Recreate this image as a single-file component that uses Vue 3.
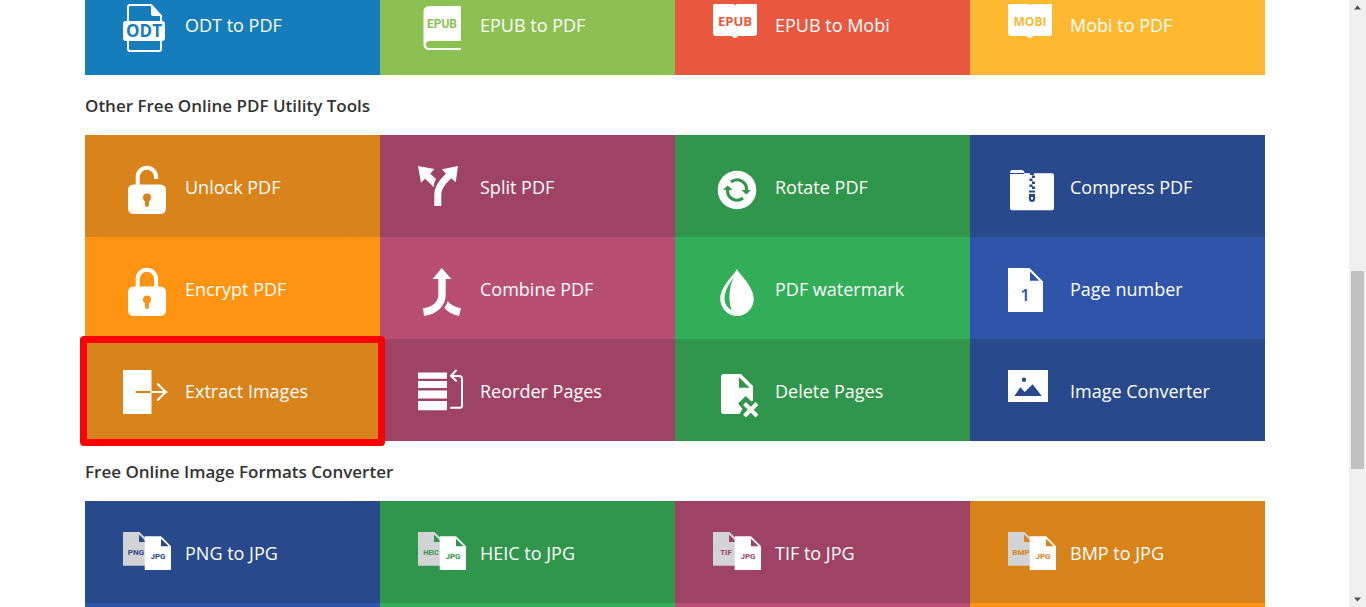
<script setup>
const convertTiles = [
  { label: 'ODT to PDF', icon: 'odt', tone: 'azure' },
  { label: 'EPUB to PDF', icon: 'book', tone: 'lime' },
  { label: 'EPUB to Mobi', icon: 'open-book', tag: 'EPUB', tone: 'red' },
  { label: 'Mobi to PDF', icon: 'open-book', tag: 'MOBI', tone: 'yellow' },
]

const utilityTiles = [
  { label: 'Unlock PDF', icon: 'unlock', tone: 'orange-dark' },
  { label: 'Split PDF', icon: 'split', tone: 'plum-dark' },
  { label: 'Rotate PDF', icon: 'rotate', tone: 'green-dark' },
  { label: 'Compress PDF', icon: 'zip', tone: 'blue-dark' },
  { label: 'Encrypt PDF', icon: 'lock', tone: 'orange' },
  { label: 'Combine PDF', icon: 'combine', tone: 'plum' },
  { label: 'PDF watermark', icon: 'drop', tone: 'green' },
  { label: 'Page number', icon: 'page', tone: 'blue' },
  { label: 'Extract Images', icon: 'extract', tone: 'orange-dark', marked: true },
  { label: 'Reorder Pages', icon: 'reorder', tone: 'plum-dark' },
  { label: 'Delete Pages', icon: 'delete', tone: 'green-dark' },
  { label: 'Image Converter', icon: 'image', tone: 'blue-dark' },
]

const imageTiles = [
  { label: 'PNG to JPG', icon: 'pair', tag: 'PNG', tone: 'blue-dark' },
  { label: 'HEIC to JPG', icon: 'pair', tag: 'HEIC', tone: 'green-dark' },
  { label: 'TIF to JPG', icon: 'pair', tag: 'TIF', tone: 'plum-dark' },
  { label: 'BMP to JPG', icon: 'pair', tag: 'BMP', tone: 'orange-dark' },
]

const sections = [
  { title: '', tiles: convertTiles, next: [] },
  { title: 'Other Free Online PDF Utility Tools', tiles: utilityTiles, next: [] },
  {
    title: 'Free Online Image Formats Converter',
    tiles: imageTiles,
    next: ['blue', 'green', 'plum', 'orange'],
  },
]
</script>

<template>
  <div class="window">
    <main class="page">
      <section v-for="(section, i) in sections" :key="i" class="section">
        <h2 v-if="section.title" class="title">{{ section.title }}</h2>
        <div class="grid">
          <a
            v-for="tile in section.tiles"
            :key="tile.label"
            href="#"
            class="tile"
            :class="[tile.tone, { marked: tile.marked }]"
          >
            <svg class="icon" viewBox="0 0 50 50" aria-hidden="true">
              <g v-if="tile.icon === 'odt'">
                <path class="line" d="M5 17V3a2 2 0 0 1 2-2h21l10 11v5M5 37v8a2 2 0 0 0 2 2h29a2 2 0 0 0 2-2v-8" />
                <path d="M28 0l11 12H30a2 2 0 0 1-2-2z" />
                <rect x="0" y="17" width="42" height="20" rx="3" />
                <text class="ink t17" x="21" y="33">ODT</text>
              </g>

              <g v-else-if="tile.icon === 'book'">
                <path d="M11 2h32v35H11.500a3.500 3.500 0 0 0 0 7H43v2H11a5.500 5.500 0 0 1-5.500-5.500V7.500A5.500 5.500 0 0 1 11 2z" />
                <text class="ink narrow t12" x="24" y="24">EPUB</text>
              </g>

              <g v-else-if="tile.icon === 'open-book'">
                <path d="M1 0h19l2 1 2-1h20v29a3 3 0 0 1-3 3H26c-1 0-2 2-4 2s-3-2-4-2H3a3 3 0 0 1-3-3V1z" />
                <text class="ink" :class="tile.tag === 'EPUB' ? 't13' : 't12'" x="22" y="22">{{ tile.tag }}</text>
              </g>

              <g v-else-if="tile.icon === 'unlock' || tile.icon === 'lock'">
                <path v-if="tile.icon === 'unlock'" class="shackle" d="M14.700 20v-9a9.200 9.200 0 0 1 18.400 0v2" />
                <path v-else class="shackle" d="M14.700 20v-9a9.200 9.200 0 0 1 18.400 0v9" />
                <rect x="5" y="18.500" width="38" height="29.500" rx="5.500" />
                <circle class="ink" cx="24" cy="31.500" r="4" />
                <path class="ink" d="M22 33h4v6a2 2 0 0 1-4 0z" />
              </g>

              <g v-else-if="tile.icon === 'split'">
                <path d="M0 0l16.300 3-4 4.700 5.700 5.300c-1.500 3-2.500 5-2 8.300L7 12.700l-4 4z" />
                <path d="M40 0l-2.300 16.300-4.400-4C28 17.500 23.300 22 23.300 29v11h-7V29c0-9 5.500-15.500 11.700-21.300l-4-4.400z" />
              </g>

              <g v-else-if="tile.icon === 'combine'">
                <path d="M23.700 0l9.600 11h-5.600v16c0 11-9 19.500-21.700 21l-1-7.700c9-1.300 15.300-6 15.300-13.300V11h-5.600z" />
                <path d="M29.700 33c3 4 7.500 6.300 13.300 7.300L41 48c-6.500-1.500-11-4-14.700-8.300 1.700-2 2.700-4 3.400-6.700z" />
              </g>

              <g v-else-if="tile.icon === 'rotate'">
                <circle cx="24" cy="24" r="19.300" />
                <path class="ink-line" d="M18 16a9.500 9.500 0 0 1 15.500 8M30 32a9.500 9.500 0 0 1-15.500-8" />
                <path class="ink" d="M28.500 24H38l-4.700 4.500zM10 24h9.500l-4.800-4.500z" />
              </g>

              <g v-else-if="tile.icon === 'drop'">
                <path d="M24 .5c1 5 16.700 17 16.700 30.500a16.700 17 0 0 1-33.400 0C7.300 17.500 23 5.500 24 .5z" />
                <path class="ink" d="M21 9c-5 7-9.500 14-9.500 21.500 0 5 2.500 9 7 11.500C15 31 16 19 21 9z" />
              </g>

              <g v-else-if="tile.icon === 'zip'">
                <path d="M2 6.500a2.500 2.500 0 0 1 2.500-2.500h9a3 3 0 0 1 2.800 3.300H44a2 2 0 0 1 2 2v33a2 2 0 0 1-2 2H4a2 2 0 0 1-2-2z" />
                <path class="ink-hair" d="M2 7.500h14" />
                <path class="ink" d="M22 7h4v2h-4zM24 9.500h3V12h-3zM21.500 12.500h3V15h-3zM24 15.500h3V18h-3zM21.500 18.500h3V21h-3zM24 20.500h3V23h-3zM21 24.500h6v2h-6z" />
                <path class="ink" fill-rule="evenodd" d="M21 28h6v5a3 3 0 0 1-6 0zM23 31v2.500h2V31z" />
              </g>

              <g v-else-if="tile.icon === 'page'">
                <path d="M0 0h21.500L35 13.500V44H0z" />
                <path class="ink" d="M22 3.500v9.200h9.200z" />
                <text class="ink medium t17" x="17" y="33">1</text>
              </g>

              <g v-else-if="tile.icon === 'extract'">
                <path d="M0 0h28.500v44H0z" />
                <path class="ink-thin" d="M13.500 22h15" />
                <path class="line thin" d="M28.500 22h15M34.700 14l8 8-8 8" />
              </g>

              <g v-else-if="tile.icon === 'reorder'">
                <path d="M0 2.500h29v6.200H0zM0 11h29v7H0zM0 20.500h29v8H0zM0 31h29v9.300H0z" />
                <path class="line thin" d="M33 37.700h9a2 2 0 0 0 2-2V9a3 3 0 0 0-3-3h-8M38 .5L33 5.800l5 5" />
              </g>

              <g v-else-if="tile.icon === 'delete'">
                <path d="M11 4h17l12 12v14.700l-1.500.8-5.800-5.500-7.700 7.500 4.500 5.500-3 5H11a3 3 0 0 1-3-3V7a3 3 0 0 1 3-3z" />
                <path class="ink" d="M26 7.300v10.400h10.700z" />
                <path class="cross" d="M31.500 33.500l12.500 12.500M44 33.500L31.500 46" />
              </g>

              <g v-else-if="tile.icon === 'image'">
                <path d="M0 0h40v32H0z" />
                <circle class="ink" cx="16" cy="9.700" r="2.200" />
                <path class="ink" d="M6.300 26l6-8.700 4.400 4.700 8-7.700 9 11.700z" />
              </g>

              <g v-else>
                <path class="back" d="M0 0h16.500L23 6.500v27.300H0z" />
                <path class="ink" d="M16 2.500V10h6.500V9z" />
                <text class="ink narrow" :class="tile.tag === 'HEIC' ? 't7' : 't8'" x="13" y="23">{{ tile.tag }}</text>
                <path d="M21.700 4.300H38l10 10V38H21.700z" />
                <path class="ink" d="M38 6.700v7.600h7.700z" />
                <text class="ink narrow t8" x="35" y="27">JPG</text>
              </g>
            </svg>
            <span class="label">{{ tile.label }}</span>
          </a>
          <div v-for="tone in section.next" :key="tone" class="tile" :class="tone"></div>
        </div>
      </section>
    </main>

    <div class="scrollbar" aria-hidden="true">
      <svg class="arrow" viewBox="0 0 17 17"><path d="M8.500 5.500L12 9.500H5z" /></svg>
      <div class="before"></div>
      <div class="thumb"></div>
      <div class="after"></div>
      <svg class="arrow" viewBox="0 0 17 17"><path d="M8.500 11.500L12 7.500H5z" /></svg>
    </div>
  </div>
</template>

<style>
body {
  background: #fff;
}
</style>

<style scoped>
.window {
  display: flex;
  height: 100vh;
  overflow: hidden;
  font-family: 'Open Sans', 'Noto Sans', sans-serif;
}
.page {
  flex: 1;
  min-width: 0;
  padding: 0 84px 0 85px;
  /* scrolled part of the first row */
  margin-top: -27px;
}
.title {
  margin: 0;
  padding-top: 2px;
  color: #333;
  font-size: 17px;
  font-weight: 600;
  line-height: 58px;
  white-space: nowrap;
}
.grid {
  display: grid;
  grid-template-columns: repeat(4, 1fr);
}
.tile {
  --bg: #28498c;
  position: relative;
  display: flex;
  align-items: flex-start;
  gap: 12px;
  box-sizing: border-box;
  min-height: 102px;
  padding: 31px 0 0 38px;
  background: var(--bg);
  color: #fff;
  text-decoration: none;
}
.azure { --bg: #167dbd; }
.lime { --bg: #8cc152; }
.red { --bg: #e8573e; }
.yellow { --bg: #feb931; }
.orange-dark { --bg: #d9831b; }
.orange { --bg: #ff9412; }
.plum-dark { --bg: #9f4365; }
.plum { --bg: #b94e73; }
.green-dark { --bg: #30964b; }
.green { --bg: #31ae57; }
.blue-dark { --bg: #28498c; }
.blue { --bg: #2f55ab; }

.marked {
  z-index: 1;
}
.marked::after {
  content: '';
  position: absolute;
  inset: -3px -5px -5px -5px;
  border: 7px solid #fe0000;
  border-radius: 4px;
}
.label {
  font-size: 18px;
  line-height: 42px;
  white-space: nowrap;
}
.icon {
  flex: none;
  width: 50px;
  height: 50px;
  fill: #fff;
  overflow: visible;
}
.icon .ink { fill: var(--bg); }
.icon .back { fill: #d2d3d5; }
.icon .line { fill: none; stroke: #fff; stroke-width: 2; }
.icon .thin { stroke-width: 2; stroke-linecap: round; stroke-linejoin: round; }
.icon .shackle { fill: none; stroke: #fff; stroke-width: 4; }
.icon .cross { fill: none; stroke: #fff; stroke-width: 4; }
.icon .ink-line { fill: none; stroke: var(--bg); stroke-width: 3; }
.icon .ink-thin { fill: none; stroke: var(--bg); stroke-width: 2; stroke-linecap: round; }
.icon .ink-hair { fill: none; stroke: var(--bg); stroke-width: 1; }
.icon text {
  font-weight: 700;
  text-anchor: middle;
}
.icon .narrow { font-family: Roboto, sans-serif; }
.icon .medium { font-weight: 600; }
.t7 { font-size: 7px; }
.t8 { font-size: 8px; }
.t12 { font-size: 12px; }
.t13 { font-size: 13px; }
.t17 { font-size: 17px; }

.scrollbar {
  display: flex;
  flex: none;
  flex-direction: column;
  width: 17px;
  background: #f0f0f0;
}
.arrow {
  flex: none;
  width: 17px;
  height: 17px;
  fill: #505050;
}
.before { flex: 254; }
.thumb {
  flex: 198;
  margin: 0 2px;
  background: #c1c1c1;
}
.after { flex: 121; }
</style>
